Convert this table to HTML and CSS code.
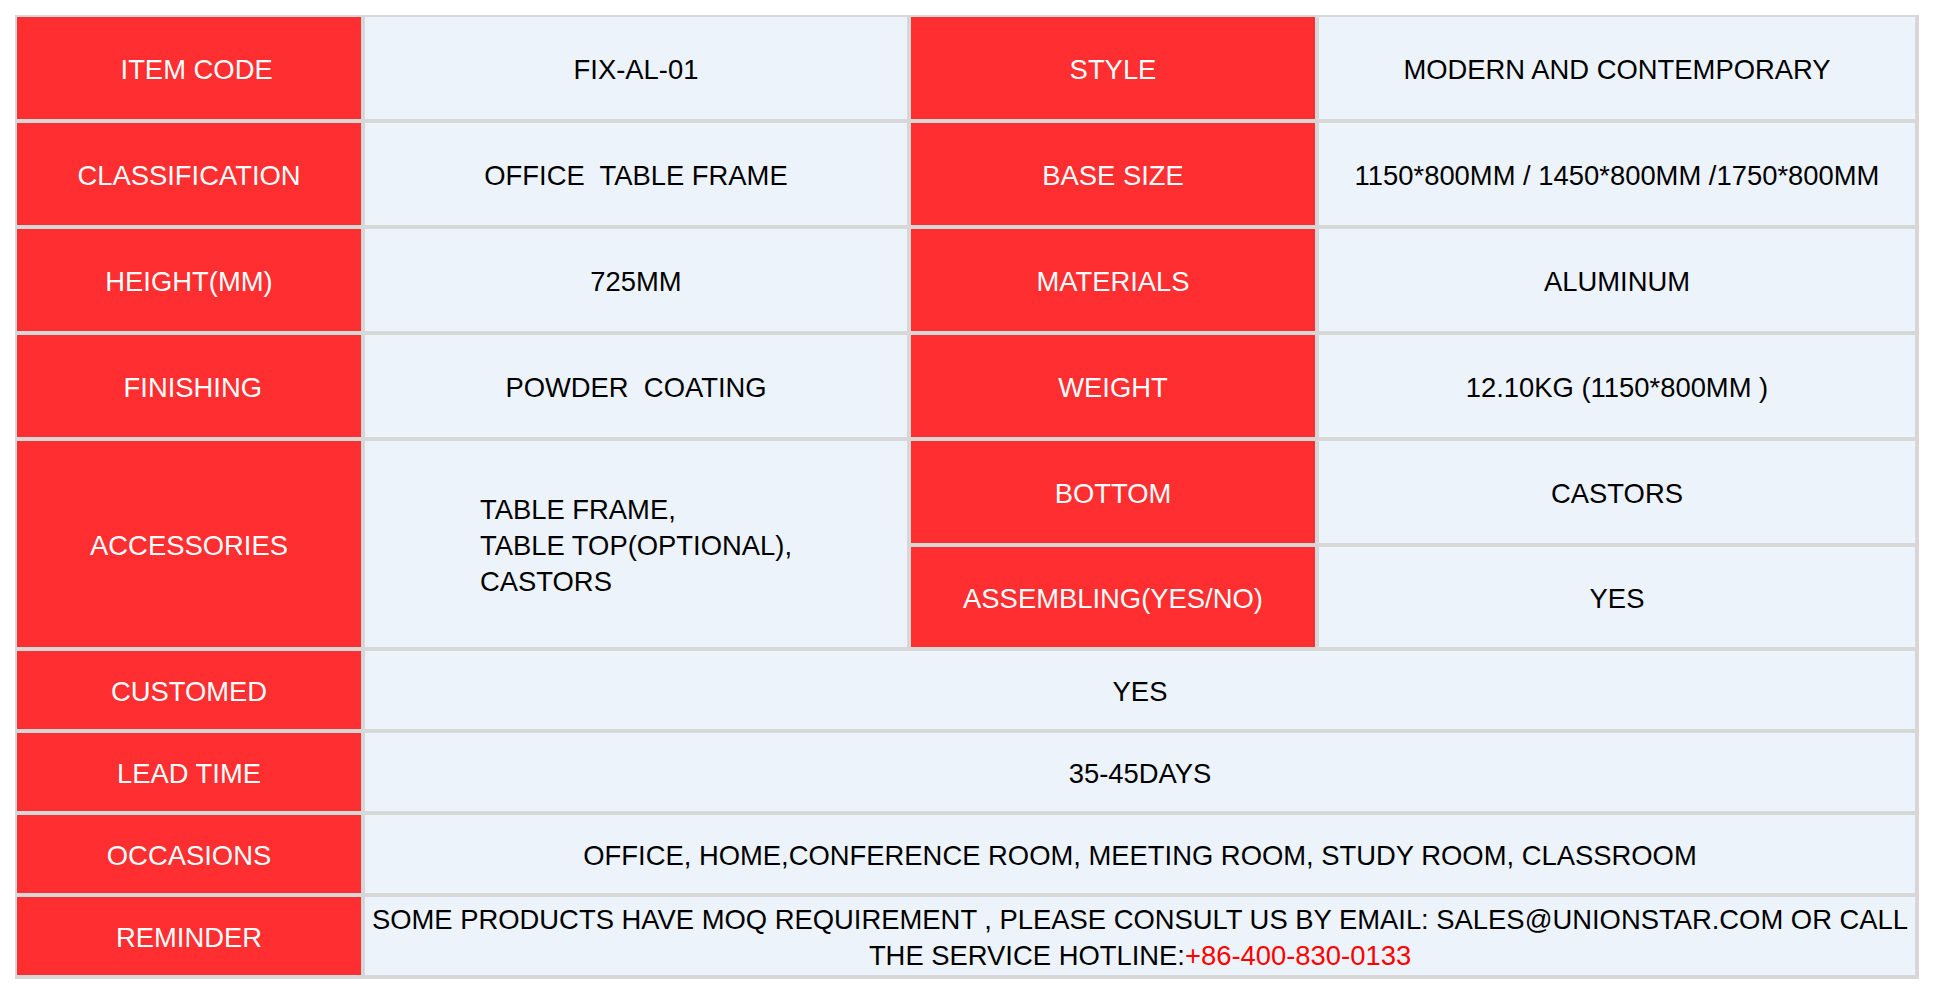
FILE: index.html
```html
<!DOCTYPE html>
<html lang="en">
<head>
<meta charset="utf-8">
<title>FIX-AL-01 Specification</title>
<link rel="stylesheet" href="styles.css">
</head>
<body>
<div class="page">
  <table class="spec">
    <colgroup>
      <col class="c1"><col class="c2"><col class="c3"><col class="c4">
    </colgroup>
    <tbody>
      <tr class="row-lg">
        <th class="key">&nbsp;&nbsp;ITEM CODE</th>
        <td class="val">FIX-AL-01</td>
        <th class="key">STYLE</th>
        <td class="val">MODERN AND CONTEMPORARY</td>
      </tr>
      <tr class="row-lg">
        <th class="key">CLASSIFICATION</th>
        <td class="val">OFFICE&nbsp; TABLE FRAME</td>
        <th class="key">BASE SIZE</th>
        <td class="val">1150*800MM / 1450*800MM /1750*800MM</td>
      </tr>
      <tr class="row-lg">
        <th class="key">HEIGHT(MM)</th>
        <td class="val">725MM</td>
        <th class="key">MATERIALS</th>
        <td class="val">ALUMINUM</td>
      </tr>
      <tr class="row-lg">
        <th class="key">&nbsp;FINISHING</th>
        <td class="val">POWDER&nbsp; COATING</td>
        <th class="key">WEIGHT</th>
        <td class="val">12.10KG (1150*800MM )</td>
      </tr>
      <tr class="row-lg">
        <th class="key" rowspan="2">ACCESSORIES</th>
        <td class="val" rowspan="2"><div class="list">TABLE FRAME,<br>TABLE TOP(OPTIONAL),<br>CASTORS</div></td>
        <th class="key">BOTTOM</th>
        <td class="val">CASTORS</td>
      </tr>
      <tr class="row-md">
        <th class="key">ASSEMBLING(YES/NO)</th>
        <td class="val">YES</td>
      </tr>
      <tr class="row-sm">
        <th class="key">CUSTOMED</th>
        <td class="val" colspan="3">YES</td>
      </tr>
      <tr class="row-sm">
        <th class="key">LEAD TIME</th>
        <td class="val" colspan="3">35-45DAYS</td>
      </tr>
      <tr class="row-sm">
        <th class="key">OCCASIONS</th>
        <td class="val" colspan="3">OFFICE, HOME,CONFERENCE ROOM, MEETING ROOM, STUDY ROOM, CLASSROOM</td>
      </tr>
      <tr class="row-sm">
        <th class="key">REMINDER</th>
        <td class="val note" colspan="3"><span class="line">SOME PRODUCTS HAVE MOQ REQUIREMENT , PLEASE CONSULT US BY EMAIL: SALES@UNIONSTAR.COM OR CALL</span><br><span class="line">THE SERVICE HOTLINE:<span class="phone">+86-400-830-0133</span></span></td>
      </tr>
    </tbody>
  </table>
</div>
</body>
</html>
```

FILE: styles.css
```css
body {
  margin: 0;
  background: #ffffff;
  font-family: "Liberation Sans", Arial, sans-serif;
}

.page {
  padding: 15px;
}

.spec {
  border-collapse: separate;
  border-spacing: 0;
  table-layout: fixed;
  width: 1904px;
  border-right: 2px solid #d7d7d7;
  border-bottom: 2px solid #d7d7d7;
}

.c1 { width: 348px; }
.c2 { width: 546px; }
.c3 { width: 408px; }
.c4 { width: 600px; }

.spec th,
.spec td {
  box-sizing: border-box;
  border: 2px solid #d7d7d7;
  padding: 3px 2px 0;
  text-align: center;
  vertical-align: middle;
  font-size: 27.4px;
  font-weight: normal;
  line-height: 36px;
}

.key {
  background: #ff2e30;
  color: #ffffff;
}

.val {
  background: #ecf3fa;
  color: #000000;
}

.row-lg th,
.row-lg td { height: 106px; }

.row-md th,
.row-md td { height: 104px; }

.row-sm th,
.row-sm td { height: 82px; }

.list {
  display: inline-block;
  text-align: left;
}

.line {
  white-space: nowrap;
}

.phone {
  color: #ff0000;
}
```
